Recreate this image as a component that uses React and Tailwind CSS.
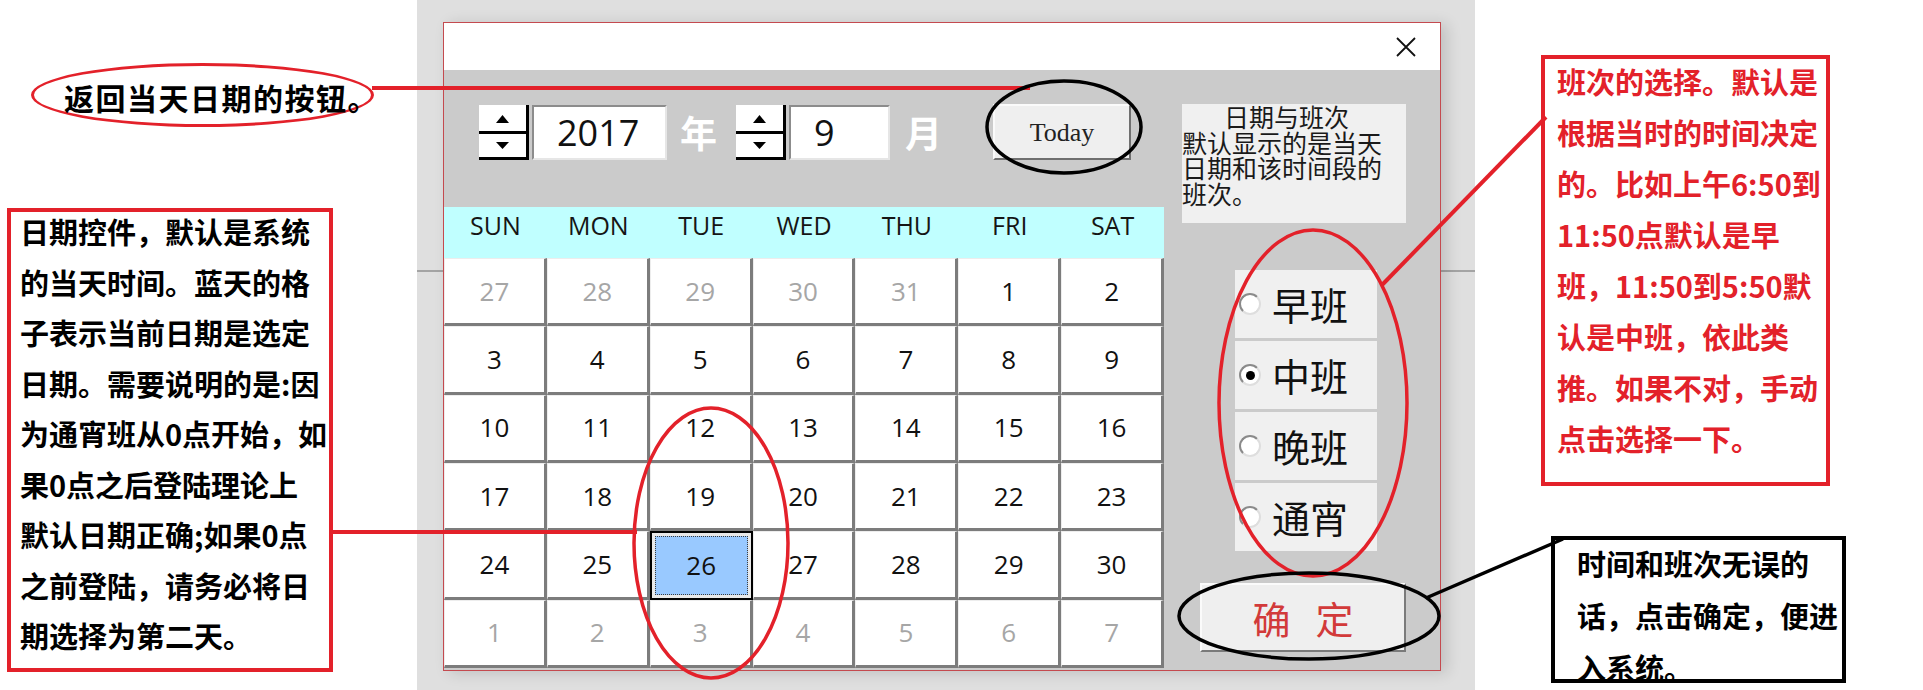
import React from "react";

const cjk = "font-['Noto_Sans_CJK_SC',sans-serif]";
const latin = "font-['Open_Sans',sans-serif]";

const buildDays = () => {
  const list = [];
  for (let d = 27; d <= 31; d++) list.push({ day: d, muted: true });
  for (let d = 1; d <= 30; d++) list.push({ day: d, muted: false, selected: d === 26 });
  for (let d = 1; d <= 7; d++) list.push({ day: d, muted: true });
  return list;
};

const weekDays = ["SUN", "MON", "TUE", "WED", "THU", "FRI", "SAT"];
const shifts = [
  { label: "早班", checked: false },
  { label: "中班", checked: true },
  { label: "晚班", checked: false },
  { label: "通宵", checked: false },
];

const Spinner = () => (
  <div className="flex h-[55px] w-[50px] flex-col border-r-[3px] border-black bg-white">
    <div className="flex flex-1 items-center justify-center border-b-[3px] border-black pt-[2px]">
      <svg width="13" height="8" viewBox="0 0 13 8">
        <path d="M6.5 0L13 8H0Z" fill="#000" />
      </svg>
    </div>
    <div className="flex flex-1 items-center justify-center border-b-[3px] border-black">
      <svg width="13" height="7" viewBox="0 0 13 7">
        <path d="M0 0H13L6.5 7Z" fill="#000" />
      </svg>
    </div>
  </div>
);

const NumberBox = ({ value, width }) => (
  <div
    className={`flex h-[55px] items-center border-2 border-t-[#8c8c8c] border-l-[#8c8c8c] border-r-[#e6e6e6] border-b-[#e6e6e6] bg-white pl-[23px] text-[36px] text-[#111] ${latin} ${width}`}
  >
    {value}
  </div>
);

const DayCell = ({ day, muted, selected }) => {
  if (selected) {
    return (
      <div className="flex border-2 border-black bg-[#e9e9e9] p-[3px]">
        <div className={`flex flex-1 items-center justify-center border border-dotted border-[#3c3c3c] bg-[#99c9ff] text-[26px] text-[#111] ${latin}`}>
          {day}
        </div>
      </div>
    );
  }
  return (
    <div
      className={`flex items-center justify-center border-t border-l border-t-[#ededed] border-l-[#ededed] border-r-[3px] border-b-[3px] border-r-[#7c7c7c] border-b-[#7c7c7c] bg-white text-[26px] ${latin} ${
        muted ? "text-[#a6a6a6]" : "text-[#111]"
      }`}
    >
      {day}
    </div>
  );
};

const Radio = ({ label, checked }) => (
  <div className="flex h-[68px] items-center bg-[#f0f0f0] pl-[4px]">
    <div className="flex h-[22px] w-[22px] items-center justify-center rounded-full border-2 border-t-[#8a8a8a] border-l-[#8a8a8a] border-r-[#dedede] border-b-[#dedede] bg-white">
      {checked && <div className="h-[9px] w-[9px] rounded-full bg-black" />}
    </div>
    <span className={`ml-[11px] text-[38px] leading-none text-[#111] ${cjk}`}>{label}</span>
  </div>
);

const Dialog = () => {
  const days = buildDays();

  return (
    <div className="relative z-10 flex h-[649px] w-[998px] flex-col border border-[#c44a4f] bg-[#cbcbcb] shadow-[6px_2px_14px_rgba(0,0,0,0.14)]">
      {/* title bar */}
      <div className="flex h-[47px] items-center justify-end bg-white pr-[24px]">
        <svg width="20" height="20" viewBox="0 0 20 20">
          <path d="M1 1L19 19M19 1L1 19" stroke="#111" strokeWidth="1.8" />
        </svg>
      </div>

      <div className="flex flex-1">
        {/* calendar side */}
        <div className="flex w-[720px] flex-col">
          <div className="flex h-[137px] items-start pt-[35px] pl-[35px]">
            <Spinner />
            <div className="ml-[3px]">
              <NumberBox value="2017" width="w-[135px]" />
            </div>
            <div className={`ml-[13px] flex h-[55px] w-[56px] items-center text-[37px] font-bold text-white ${cjk}`}>年</div>
            <Spinner />
            <div className="ml-[3px]">
              <NumberBox value="9" width="w-[101px]" />
            </div>
            <div className={`ml-[15px] flex h-[55px] w-[88px] items-center text-[37px] font-bold text-white ${cjk}`}>月</div>
            <div className="-mt-[1px] flex h-[56px] w-[138px] items-center justify-center border-2 border-t-[#fafafa] border-l-[#fafafa] border-r-[#6f6f6f] border-b-[#6f6f6f] bg-[#efefef] text-[26px] text-[#222] font-['Liberation_Serif',serif]">
              Today
            </div>
          </div>

          <div className="grid h-[51px] grid-cols-7 bg-[#c0ffff]">
            {weekDays.map((w) => (
              <div key={w} className={`flex items-center justify-center pb-[13px] text-[25px] text-[#151515] ${latin}`}>
                {w}
              </div>
            ))}
          </div>

          <div className="grid h-[410px] grid-cols-7 grid-rows-6">
            {days.map((d, i) => (
              <DayCell key={i} {...d} />
            ))}
          </div>
        </div>

        {/* shift side */}
        <div className="flex flex-1 flex-col">
          <p className={`mt-[34px] ml-[18px] h-[119px] w-[224px] bg-[#f0f0f0] text-[25px] leading-[25.5px] text-[#1a1a1a] ${cjk}`}>
            <span className="inline-block w-[42px]" />
            日期与班次
            <br />
            默认显示的是当天
            <br />
            日期和该时间段的
            <br />
            班次。
          </p>

          <div className="mt-[47px] ml-[71px] flex w-[142px] flex-col gap-[3px]">
            {shifts.map((s) => (
              <Radio key={s.label} {...s} />
            ))}
          </div>

          <div className={`mt-[32px] ml-[36px] flex h-[69px] w-[206px] items-center justify-center gap-[25px] border-2 border-t-[#fbfbfb] border-l-[#fbfbfb] border-r-[#7a7a7a] border-b-[#7a7a7a] bg-[#efefef] text-[38px] text-[#d23a3a] ${cjk}`}>
            <span>确</span>
            <span>定</span>
          </div>
        </div>
      </div>
    </div>
  );
};

const Overlay = () => (
  <svg className="pointer-events-none absolute inset-0 z-20" width="1923" height="690" viewBox="0 0 1923 690">
    <line x1="372" y1="88" x2="1030" y2="88" stroke="#e3212a" strokeWidth="4" />
    <ellipse cx="1064" cy="127" rx="77" ry="46" fill="none" stroke="#000" strokeWidth="3.5" />
    <line x1="333" y1="532" x2="637" y2="532" stroke="#e3212a" strokeWidth="4" />
    <ellipse cx="711" cy="543" rx="77" ry="135" fill="none" stroke="#e3212a" strokeWidth="3.5" />
    <ellipse cx="1313" cy="403" rx="94" ry="173" fill="none" stroke="#e3212a" strokeWidth="3.5" />
    <line x1="1382" y1="285" x2="1546" y2="117" stroke="#e3212a" strokeWidth="4" />
    <ellipse cx="1309" cy="616" rx="130" ry="43" fill="none" stroke="#000" strokeWidth="3.5" />
    <line x1="1426" y1="598" x2="1563" y2="539" stroke="#000" strokeWidth="3.5" />
  </svg>
);

export default function App() {
  return (
    <div className={`relative flex h-[690px] w-[1923px] overflow-hidden bg-white ${cjk}`}>
      {/* left notes */}
      <div className="flex w-[417px] flex-col">
        <div className="mt-[63px] ml-[31px] flex h-[64px] w-[343px] items-center rounded-[50%] border-[3px] border-[#e3212a] pt-[4px] pl-[30px] text-[30px] font-bold tracking-[1.5px] whitespace-nowrap text-black">
          返回当天日期的按钮。
        </div>
        <div className="mt-[81px] ml-[7px] h-[464px] w-[326px] border-4 border-[#e3212a] pl-[9px] text-[29px] font-bold leading-[50.5px] whitespace-nowrap text-black">
          <div className="-mt-[6px]">
            <div>日期控件，默认是系统</div>
            <div>的当天时间。蓝天的格</div>
            <div>子表示当前日期是选定</div>
            <div>日期。需要说明的是:因</div>
            <div>为通宵班从0点开始，如</div>
            <div>果0点之后登陆理论上</div>
            <div>默认日期正确;如果0点</div>
            <div>之前登陆，请务必将日</div>
            <div>期选择为第二天。</div>
          </div>
        </div>
      </div>

      {/* backdrop with the dialog */}
      <div className="relative w-[1058px] bg-[#dfdfdf] pt-[22px] pl-[26px]">
        <div className="absolute top-[270px] right-0 left-0 h-[2px] bg-[#a4a4a4]" />
        <Dialog />
      </div>

      {/* right notes */}
      <div className="flex flex-1 flex-col">
        <div className="mt-[55px] ml-[66px] h-[431px] w-[289px] border-4 border-[#e3212a] pl-[12px] text-[29px] font-bold leading-[51px] whitespace-nowrap text-[#e3212a]">
          <div className="-mt-[3px]">
            <div>班次的选择。默认是</div>
            <div>根据当时的时间决定</div>
            <div>的。比如上午6:50到</div>
            <div>11:50点默认是早</div>
            <div>班，11:50到5:50默</div>
            <div>认是中班，依此类</div>
            <div>推。如果不对，手动</div>
            <div>点击选择一下。</div>
          </div>
        </div>
        <div className="mt-[50px] ml-[76px] h-[147px] w-[295px] border-4 border-black pl-[22px] text-[29px] font-bold leading-[52px] whitespace-nowrap text-black">
          <div className="-mt-[3px]">
            <div>时间和班次无误的</div>
            <div>话，点击确定，便进</div>
            <div>入系统。</div>
          </div>
        </div>
      </div>

      <Overlay />
    </div>
  );
}
